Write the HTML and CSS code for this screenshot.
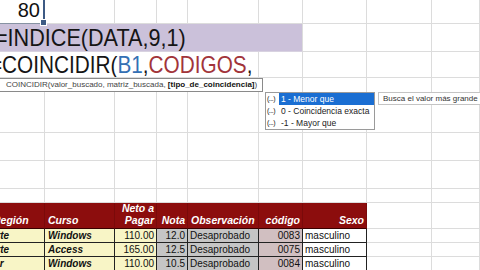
FILE: index.html
```html
<!DOCTYPE html>
<html lang="es">
<head>
    <meta charset="UTF-8">
    <title>COINCIDIR - hoja</title>
    <link rel="stylesheet" href="styles.css">
</head>
<body>
    <div class="sheet">
        <!-- fila 1 -->
        <div class="cell sel"><span class="num-big">80</span></div>
        <div class="cell"></div><div class="cell"></div><div class="cell"></div><div class="cell"></div>
        <div class="cell"></div><div class="cell"></div><div class="cell"></div><div class="cell"></div>

        <!-- fila 2 -->
        <div class="cell band span-6"><span class="big f-index">=INDICE(DATA,9,1)</span></div>
        <div class="cell"></div><div class="cell"></div><div class="cell"></div>

        <!-- fila 3 -->
        <div class="cell span-5"><span class="big f-match">=COINCIDIR(<span class="ref">B1</span>,<span class="rng">CODIGOS</span>,</span></div>
        <div class="cell"></div><div class="cell"></div><div class="cell"></div><div class="cell"></div>

        <!-- filas vacias -->
        <div class="cell"></div><div class="cell"></div><div class="cell"></div><div class="cell"></div>
        <div class="cell"></div><div class="cell"></div><div class="cell"></div><div class="cell"></div><div class="cell"></div>
        <div class="cell"></div><div class="cell"></div><div class="cell"></div><div class="cell"></div>
        <div class="cell"></div><div class="cell"></div><div class="cell"></div><div class="cell"></div><div class="cell"></div>
        <div class="cell"></div><div class="cell"></div><div class="cell"></div><div class="cell"></div>
        <div class="cell"></div><div class="cell"></div><div class="cell"></div><div class="cell"></div><div class="cell"></div>
        <div class="cell"></div><div class="cell"></div><div class="cell"></div><div class="cell"></div>
        <div class="cell"></div><div class="cell"></div><div class="cell"></div><div class="cell"></div><div class="cell"></div>

        <!-- encabezado tabla -->
        <div class="cell th"><span class="cut-head">Región</span></div>
        <div class="cell th">Curso</div>
        <div class="cell th right two">Neto a<br>Pagar</div>
        <div class="cell th right">Nota</div>
        <div class="cell th">Observación</div>
        <div class="cell th right">código</div>
        <div class="cell th right">Sexo</div>
        <div class="cell"></div><div class="cell"></div>

        <!-- datos -->
        <div class="cell td yellow bi"><span class="cut-norte">Norte</span></div>
        <div class="cell td yellow bi">Windows</div>
        <div class="cell td yellow right">110.00</div>
        <div class="cell td gray right">12.0</div>
        <div class="cell td gray">Desaprobado</div>
        <div class="cell td rose right">0083</div>
        <div class="cell td">masculino</div>
        <div class="cell"></div><div class="cell"></div>

        <div class="cell td yellow bi"><span class="cut-norte">Norte</span></div>
        <div class="cell td yellow bi">Access</div>
        <div class="cell td yellow right">165.00</div>
        <div class="cell td gray right">12.5</div>
        <div class="cell td gray">Desaprobado</div>
        <div class="cell td rose right">0075</div>
        <div class="cell td">masculino</div>
        <div class="cell"></div><div class="cell"></div>

        <div class="cell td yellow bi"><span class="cut-sur">Sur</span></div>
        <div class="cell td yellow bi">Windows</div>
        <div class="cell td yellow right">110.00</div>
        <div class="cell td gray right">10.5</div>
        <div class="cell td gray">Desaprobado</div>
        <div class="cell td rose right">0084</div>
        <div class="cell td">masculino</div>
        <div class="cell"></div><div class="cell"></div>

        <!-- ayudas flotantes -->
        <div class="hint">COINCIDIR(valor_buscado, matriz_buscada, <b>[tipo_de_coincidencia]</b>)</div>
        <div class="dropdown">
            <div class="opt active"><span class="ico">(...)</span><span class="lbl">1 - Menor que</span></div>
            <div class="opt"><span class="ico">(...)</span><span class="lbl">0 - Coincidencia exacta</span></div>
            <div class="opt"><span class="ico">(...)</span><span class="lbl">-1 - Mayor que</span></div>
        </div>
        <div class="tip">Busca el valor más grande que</div>
    </div>
</body>
</html>
```

FILE: styles.css
```css
body {
    margin: 0;
    background: #fff;
    font-family: "Liberation Sans", Arial, sans-serif;
    color: #111;
    overflow: hidden;
}

.sheet {
    position: relative;
    display: grid;
    grid-template-columns: 45px 70px 42px 31px 71px 44px 64px 65px 48px;
    grid-template-rows: 24px 28px 26px 55px 28px 28px 14px 26px 14px 14px 14px;
    width: 480px;
    height: 270px;
    overflow: hidden;
}

.cell {
    display: flex;
    align-items: center;
    min-width: 0;
    overflow: hidden;
    white-space: nowrap;
    border-right: 1px solid #dcdcdc;
    border-bottom: 1px solid #dcdcdc;
}

.span-6 { grid-column: span 6; }
.span-5 { grid-column: span 5; }

/* celda activa */
.sel {
    position: relative;
    justify-content: flex-end;
    align-items: flex-end;
    overflow: visible;
    border-right: 2px solid #3d5a84;
    border-bottom: 1px solid #8793a3;
}

.sel::after {
    content: "";
    position: absolute;
    right: -4px;
    bottom: -3px;
    width: 5px;
    height: 5px;
    background: #3d5a84;
    border: 1px solid #fff;
}

.num-big {
    font-size: 20px;
    line-height: 20px;
    padding: 0 3px 3px 0;
}

.band {
    background: #cbc1da;
    border-bottom-color: #d8d2e0;
}

.big {
    display: inline-block;
    font-size: 24px;
    line-height: 24px;
    transform-origin: left bottom;
    color: #151515;
}

.band, .span-5 { align-items: flex-end; }

.f-index {
    margin: 0 0 1px -5px;
    transform: scaleX(0.9);
}

.f-match {
    margin-left: -10px;
    transform: scaleX(0.865);
}

.ref { color: #3470b4; }
.rng { color: #a2343a; }

/* tabla */
.th {
    background: #8c0d0d;
    color: #fff;
    font-size: 10.5px;
    font-weight: bold;
    font-style: italic;
    align-items: flex-end;
    line-height: 12px;
    padding: 0 2px 2px 3px;
    border-right-color: #7a0a0a;
    border-bottom-color: #3a0000;
}

.th.right {
    justify-content: flex-end;
    text-align: right;
}

.td {
    font-size: 10px;
    line-height: 14px;
    padding: 0 2px;
    border-right-color: #222;
    border-bottom-color: #222;
}

.td.right { justify-content: flex-end; }

.yellow { background: #f8f5c6; }
.gray { background: #c5c5c5; }
.rose { background: #d1bfc1; }

.bi {
    font-weight: bold;
    font-style: italic;
    padding-left: 3px;
}

.cut-head { margin-left: -10px; }
.cut-norte { margin-left: -20px; }
.cut-sur { margin-left: -16px; }

/* ayudas de formula */
.hint {
    position: absolute;
    left: -1px;
    top: 78px;
    width: 256px;
    height: 12px;
    padding-left: 6px;
    background: #fff;
    border: 1px solid #8a8a8a;
    font-size: 8px;
    line-height: 12px;
    color: #444;
    white-space: nowrap;
    overflow: hidden;
}

.hint b { color: #111; }

.dropdown {
    position: absolute;
    left: 265px;
    top: 92px;
    width: 108px;
    height: 36px;
    background: #fff;
    border: 1px solid #9a9a9a;
    font-size: 8.5px;
    line-height: 12px;
    color: #222;
}

.opt {
    display: flex;
    height: 12px;
    white-space: nowrap;
}

.ico {
    width: 12px;
    padding-left: 1px;
    font-size: 7px;
    letter-spacing: -0.5px;
    color: #111;
}

.lbl {
    flex: 1;
    padding-left: 2px;
}

.opt.active .lbl {
    background: #1a6ed2;
    color: #fff;
}

.tip {
    position: absolute;
    left: 378px;
    top: 92px;
    width: 110px;
    height: 11px;
    padding-left: 4px;
    background: #fff;
    border: 1px solid #c4c4c4;
    font-size: 8px;
    line-height: 11px;
    color: #333;
    white-space: nowrap;
    overflow: hidden;
}
```
